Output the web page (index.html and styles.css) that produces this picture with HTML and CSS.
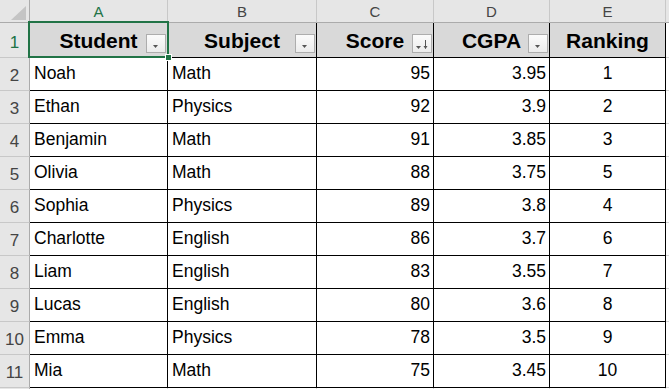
FILE: index.html
```html
<!DOCTYPE html>
<html>
<head>
<meta charset="utf-8">
<link rel="stylesheet" href="styles.css">
</head>
<body>
<div class="sheet">
  <div class="corner"><svg class="corner-tri" width="30" height="23" viewBox="0 0 30 23"><polygon points="11,20 26,20 26,6" fill="#c4c4c4"/></svg></div>
  <div class="colh sel">A</div>
  <div class="colh">B</div>
  <div class="colh">C</div>
  <div class="colh">D</div>
  <div class="colh">E</div>
  <div class="colh last"></div>

  <div class="rowh sel">1</div>
  <div class="hd c-a">Student<span class="fbtn"><svg width="20" height="19" viewBox="0 0 20 19"><polygon points="7,11 12,11 9.5,14" fill="#555"/></svg></span></div>
  <div class="hd">Subject<span class="fbtn"><svg width="20" height="19" viewBox="0 0 20 19"><polygon points="7,11 12,11 9.5,14" fill="#555"/></svg></span></div>
  <div class="hd">Score<span class="fbtn"><svg width="20" height="19" viewBox="0 0 20 19"><polygon points="4,12 9,12 6.5,15" fill="#555"/><path d="M13.5 6 V14.5" stroke="#555" stroke-width="1"/><polygon points="11.5,12 15.5,12 13.5,15" fill="#555"/></svg></span></div>
  <div class="hd">CGPA<span class="fbtn"><svg width="20" height="19" viewBox="0 0 20 19"><polygon points="7,11 12,11 9.5,14" fill="#555"/></svg></span></div>
  <div class="hd">Ranking</div>
  <div class="blank r1"></div>

  <div class="rowh">2</div><div class="td l">Noah</div><div class="td l">Math</div><div class="td r">95</div><div class="td r">3.95</div><div class="td c">1</div><div class="blank"></div>
  <div class="rowh">3</div><div class="td l">Ethan</div><div class="td l">Physics</div><div class="td r">92</div><div class="td r">3.9</div><div class="td c">2</div><div class="blank"></div>
  <div class="rowh">4</div><div class="td l">Benjamin</div><div class="td l">Math</div><div class="td r">91</div><div class="td r">3.85</div><div class="td c">3</div><div class="blank"></div>
  <div class="rowh">5</div><div class="td l">Olivia</div><div class="td l">Math</div><div class="td r">88</div><div class="td r">3.75</div><div class="td c">5</div><div class="blank"></div>
  <div class="rowh">6</div><div class="td l">Sophia</div><div class="td l">Physics</div><div class="td r">89</div><div class="td r">3.8</div><div class="td c">4</div><div class="blank"></div>
  <div class="rowh">7</div><div class="td l">Charlotte</div><div class="td l">English</div><div class="td r">86</div><div class="td r">3.7</div><div class="td c">6</div><div class="blank"></div>
  <div class="rowh">8</div><div class="td l">Liam</div><div class="td l">English</div><div class="td r">83</div><div class="td r">3.55</div><div class="td c">7</div><div class="blank"></div>
  <div class="rowh">9</div><div class="td l">Lucas</div><div class="td l">English</div><div class="td r">80</div><div class="td r">3.6</div><div class="td c">8</div><div class="blank"></div>
  <div class="rowh">10</div><div class="td l">Emma</div><div class="td l">Physics</div><div class="td r">78</div><div class="td r">3.5</div><div class="td c">9</div><div class="blank"></div>
  <div class="rowh">11</div><div class="td l">Mia</div><div class="td l">Math</div><div class="td r">75</div><div class="td r">3.45</div><div class="td c">10</div><div class="blank"></div>

  <div class="rowh"></div><div class="tail"></div><div class="tail"></div><div class="tail"></div><div class="tail"></div><div class="tail"></div><div class="blank"></div>

  <div class="selbox"><span class="handle"></span></div>
</div>
</body>
</html>
```

FILE: styles.css
```css
html, body {
  margin: 0;
  padding: 0;
  background: #ffffff;
  overflow: hidden;
}
.sheet {
  position: relative;
  width: 669px;
  height: 389px;
  display: grid;
  grid-template-columns: 30px 138px 149px 117px 116px 116px 1fr;
  grid-template-rows: 23px 35px repeat(10, 33px) 1fr;
  font-family: "Liberation Sans", Arial, sans-serif;
  color: #000;
  overflow: hidden;
}
.sheet > div {
  box-sizing: border-box;
  min-width: 0;
}
.corner {
  background: #e6e6e6;
  border-right: 1px solid #ababab;
  border-bottom: 1px solid #ababab;
  position: relative;
}
.corner-tri {
  position: absolute;
  left: 0;
  top: 0;
}
.colh {
  background: #e6e6e6;
  border-right: 1px solid #c8c8c8;
  border-bottom: 1px solid #ababab;
  display: flex;
  align-items: center;
  justify-content: center;
  font-size: 15px;
  color: #444;
  padding-top: 1px;
}
.colh.sel {
  color: #217346;
}
.colh.last {
  border-right: none;
}
.rowh {
  background: #e6e6e6;
  border-right: 1px solid #ababab;
  border-bottom: 1px solid #c8c8c8;
  display: flex;
  align-items: flex-end;
  justify-content: center;
  font-size: 17px;
  color: #444;
  padding-bottom: 4px;
}
.rowh.sel {
  color: #217346;
}
.hd {
  position: relative;
  background: #d9d9d9;
  border-right: 1px solid #000;
  border-bottom: 1px solid #000;
  display: flex;
  align-items: center;
  justify-content: center;
  font-size: 21px;
  font-weight: bold;
  padding-top: 1px;
}
.fbtn {
  position: absolute;
  right: 1px;
  top: 11px;
  width: 20px;
  height: 19px;
  box-sizing: border-box;
  border: 1px solid #adadad;
  background: linear-gradient(#fbfbfb, #ececec);
}
.fbtn svg {
  position: absolute;
  left: -1px;
  top: -1px;
}
.td {
  border-right: 1px solid #000;
  border-bottom: 1px solid #000;
  display: flex;
  align-items: flex-end;
  font-size: 17.5px;
  padding: 0 4px 6px 4px;
  white-space: nowrap;
}
.td.l { justify-content: flex-start; }
.td.r { justify-content: flex-end; padding-right: 3px; }
.td.c { justify-content: center; }
.blank {
  border-bottom: 1px solid #d4d4d4;
}
.tail {
  border-right: 1px solid #d4d4d4;
}
.selbox {
  position: absolute;
  left: 28px;
  top: 21px;
  width: 141px;
  height: 37px;
  box-sizing: border-box;
  border: 2px solid #217346;
  pointer-events: none;
}
.handle {
  position: absolute;
  right: -5px;
  bottom: -5px;
  width: 5px;
  height: 5px;
  background: #217346;
  border: 1px solid #fff;
}
```
